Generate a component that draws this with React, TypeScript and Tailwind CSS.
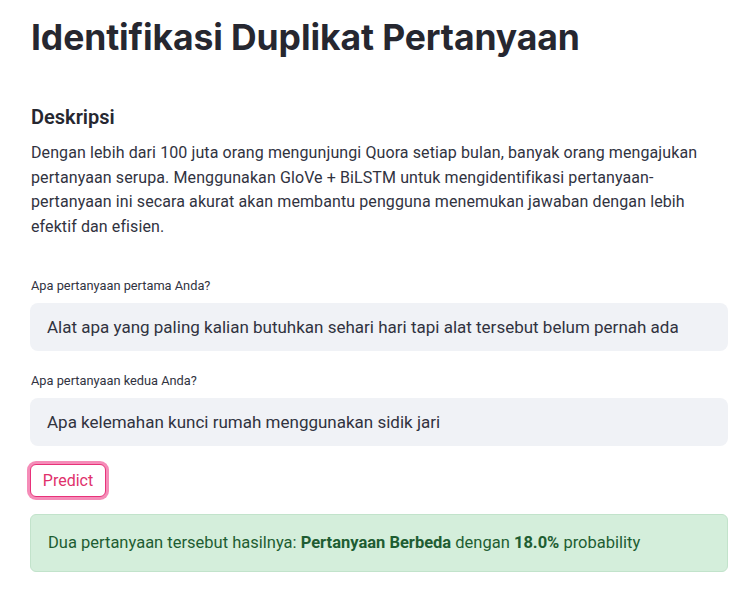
export default function App() {
  return (
    <div className="min-h-screen bg-white text-[#262730]">
      <div className="px-[30px] pt-[12px] font-['Roboto',sans-serif]">
        <h1 className="font-['Inter',sans-serif] text-[35.5px] font-bold leading-[52px] tracking-[-0.1px] pl-[1px]">
          Identifikasi Duplikat Pertanyaan
        </h1>

        <h3 className="mt-[40px] text-[20px] font-semibold leading-[26px] pl-[1px]">Deskripsi</h3>
        <p className="mt-[11px] text-[16px] leading-[24.6px] tracking-[0.1px] text-[#31333f] pl-[1px] pr-[20px]">
          Dengan lebih dari 100 juta orang mengunjungi Quora setiap bulan, banyak orang mengajukan pertanyaan
          serupa. Menggunakan GloVe + BiLSTM untuk mengidentifikasi pertanyaan-pertanyaan ini secara akurat akan
          membantu pengguna menemukan jawaban dengan lebih efektif dan efisien.
        </p>

        <div className="mt-[39px] flex flex-col gap-[9px] w-[698px]">
          <label className="text-[12.8px] leading-[16px] text-[#31333f] pl-[1px]">Apa pertanyaan pertama Anda?</label>
          <div className="h-[48px] rounded-[8px] bg-[#f0f2f6] flex items-center px-[17px] text-[17px] text-[#31333f]">
            Alat apa yang paling kalian butuhkan sehari hari tapi alat tersebut belum pernah ada
          </div>
        </div>

        <div className="mt-[22px] flex flex-col gap-[9px] w-[698px]">
          <label className="text-[12.8px] leading-[16px] text-[#31333f] pl-[1px]">Apa pertanyaan kedua Anda?</label>
          <div className="h-[48px] rounded-[8px] bg-[#f0f2f6] flex items-center px-[17px] text-[17px] text-[#31333f]">
            Apa kelemahan kunci rumah menggunakan sidik jari
          </div>
        </div>

        <button className="mt-[18px] h-[33px] w-[76px] rounded-[6px] border border-[#e8327a] bg-white text-[16px] text-[#e0306b] ring-[3px] ring-[#f58cb8]">
          Predict
        </button>

        <div className="mt-[17px] w-[698px] h-[58px] rounded-[6px] border border-[#c2e3cb] bg-[#d4eedb] flex items-center px-[17px] text-[16.5px] text-[#1e5d32]">
          <span>
            Dua pertanyaan tersebut hasilnya: <b className="font-bold">Pertanyaan Berbeda</b> dengan{" "}
            <b className="font-bold">18.0%</b> probability
          </span>
        </div>
      </div>
    </div>
  );
}
